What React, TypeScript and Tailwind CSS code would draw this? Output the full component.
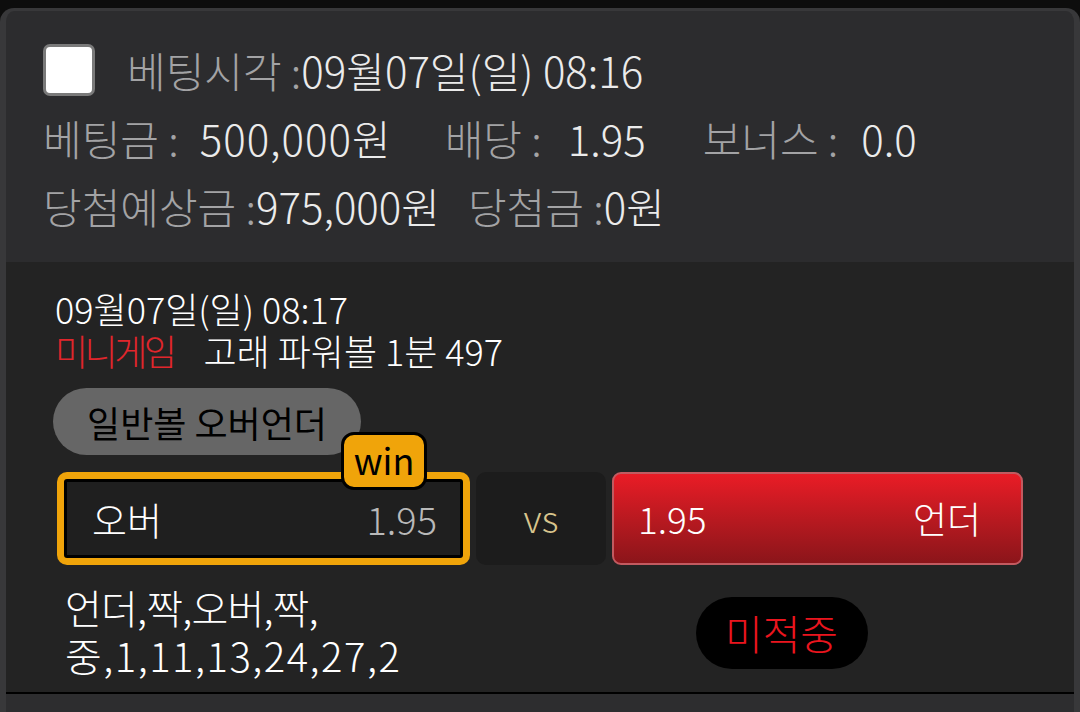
import React from "react";

const FONT = { fontFamily: '"Noto Sans CJK KR", "Noto Sans", sans-serif' };

function Label({ children }: { children: React.ReactNode }) {
  return <span className="text-[#a3a3a5]">{children}</span>;
}

function Value({ children }: { children: React.ReactNode }) {
  return <span className="text-[#ebebeb]">{children}</span>;
}

export default function App() {
  return (
    <div className="min-h-[712px] bg-[#0d0d0d] pt-[8px] font-light" style={FONT}>
      <div className="overflow-hidden rounded-t-[14px] border-x-[6px] border-t-[3px] border-[#38383a] bg-[#2c2c2e]">
        {/* bet summary */}
        <div className="flex flex-col px-[37px] pt-[25px] pb-[22px] text-[42px] leading-none">
          <div className="flex h-[68px] items-center">
            <div className="h-[52px] w-[52px] rounded-[7px] border-[3px] border-[#7a7a7a] bg-white" />
            <div className="ml-[32px]">
              <Label>베팅시각 :</Label>
              <Value>09월07일(일) 08:16</Value>
            </div>
          </div>
          <div className="flex h-[68px] items-center">
            <Label>베팅금 :</Label>
            <span className="ml-[21px] tracking-[1px]">
              <Value>500,000원</Value>
            </span>
            <span className="ml-[53px]">
              <Label>배당 :</Label>
            </span>
            <span className="ml-[26px]">
              <Value>1.95</Value>
            </span>
            <span className="ml-[57px]">
              <Label>보너스 :</Label>
            </span>
            <span className="ml-[23px]">
              <Value>0.0</Value>
            </span>
          </div>
          <div className="flex h-[68px] items-center">
            <Label>당첨예상금 :</Label>
            <Value>975,000원</Value>
            <span className="ml-[28px]">
              <Label>당첨금 :</Label>
            </span>
            <Value>0원</Value>
          </div>
        </div>

        {/* game detail */}
        <div className="border-b-[2px] border-black bg-[#232323] px-[51px] pt-[25px] pb-[13px]">
          <div className="-ml-[2px] text-[36px] leading-[42px] text-white">
            <div>09월07일(일) 08:17</div>
            <div>
              <span className="tracking-[-3.5px] text-[#e0262c]">미니게임</span>
              <span className="ml-[30px]">고래 파워볼 1분 497</span>
            </div>
          </div>

          <div className="-ml-[4px] mt-[17px] inline-flex h-[67px] w-[308px] items-center justify-center rounded-full bg-[#666666] text-[36px] font-normal text-black">
            일반볼 오버언더
          </div>

          <div className="mt-[17px] grid grid-cols-[413px_130px_1fr] gap-[6px]">
            <div className="relative h-[93px] rounded-[10px] bg-[#f0a40a] p-[7px]">
              <div className="flex h-full items-center justify-between rounded-[3px] border-[3px] border-black bg-[#1f1f1f] pl-[25px] pr-[23px] text-[38px]">
                <span className="text-white">오버</span>
                <span className="text-[#b9b9b9]">1.95</span>
              </div>
              <div className="absolute -top-[40px] right-[43px] flex h-[58px] w-[86px] items-center justify-center rounded-[13px] border-[3px] border-black bg-[#f0a40a] pb-[4px] text-[36px] font-normal text-black">
                win
              </div>
            </div>
            <div className="flex h-[93px] items-center justify-center rounded-[10px] bg-[#1c1c1c] pb-[2px] text-[37px] text-[#d8c48d]">
              vs
            </div>
            <div className="flex h-[93px] items-center justify-between rounded-[9px] border-[2px] border-[#c25a60] bg-gradient-to-b from-[#ea1c26] to-[#8b151a] pl-[24px] pr-[40px] text-[37px] text-white">
              <span>1.95</span>
              <span>언더</span>
            </div>
          </div>

          <div className="mt-[18px] grid grid-cols-2">
            <div className="pl-[8px] text-[40px] leading-[48px] text-white">
              <div className="tracking-[-0.8px]">언더,짝,오버,짝,</div>
              <div className="tracking-[1.5px]">중,1,11,13,24,27,2</div>
            </div>
            <div className="flex items-center justify-center">
              <div className="mt-[4px] flex h-[72px] w-[172px] items-center justify-center rounded-full bg-black text-[41px] text-[#ea151e]">
                미적중
              </div>
            </div>
          </div>
        </div>
        <div className="h-[20px] bg-[#2d2d2f]" />
      </div>
    </div>
  );
}
